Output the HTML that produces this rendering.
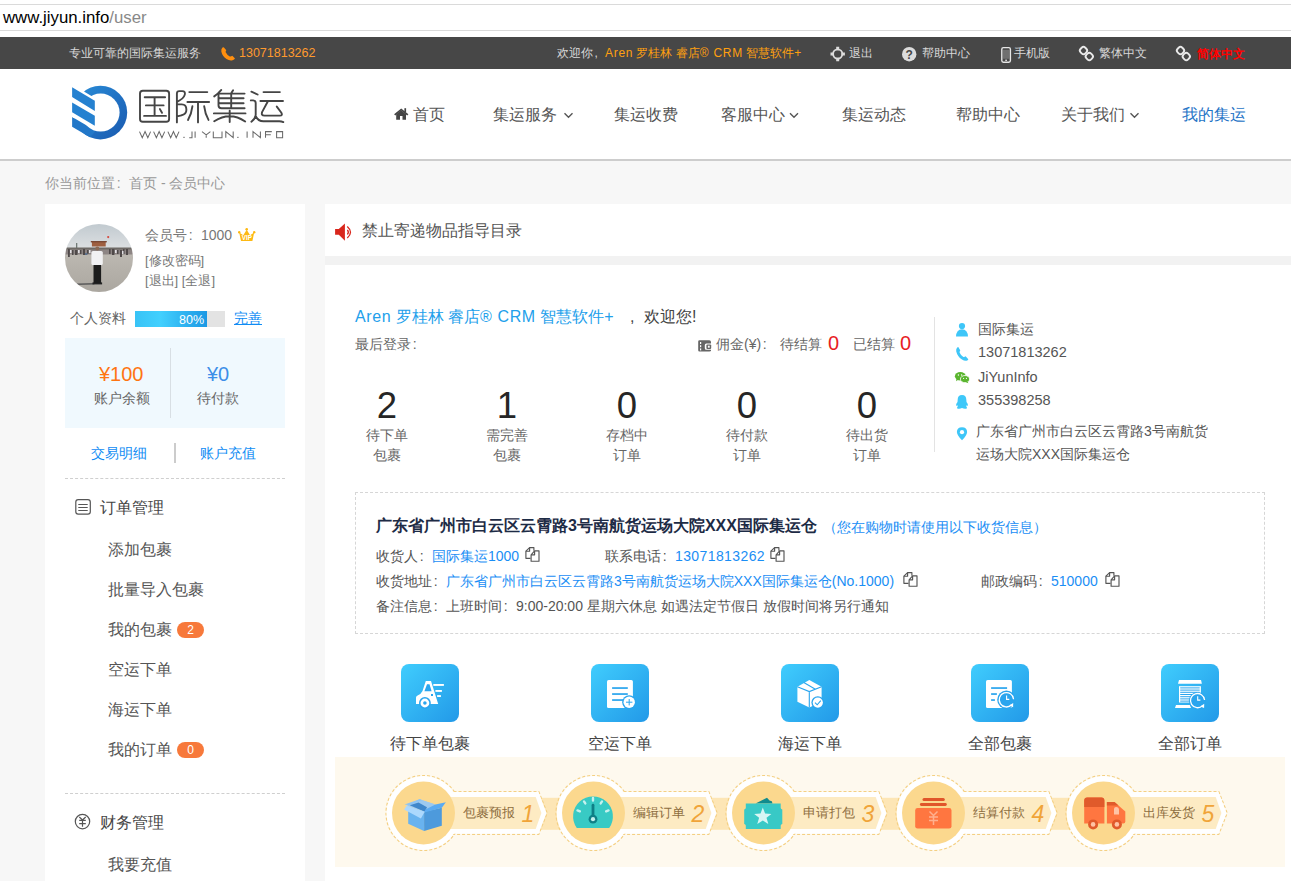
<!DOCTYPE html>
<html><head><meta charset="utf-8">
<style>
*{margin:0;padding:0;box-sizing:border-box}
html,body{width:1291px;height:881px;overflow:hidden}
body{position:relative;background:#f7f7f7;font-family:"Liberation Sans",sans-serif;color:#555;font-size:14px}
.a{position:absolute;white-space:nowrap;line-height:1}
#url{position:absolute;left:0;top:0;width:1291px;height:37px;background:#fff}
#url .l1{position:absolute;left:0;top:4px;width:1291px;height:1px;background:#dadada}
#url .l2{position:absolute;left:0;top:30px;width:1291px;height:1px;background:#dadada}
#topbar{position:absolute;left:0;top:37px;width:1291px;height:32px;background:#474747;color:#d8d8d8;font-size:12px}
#header{position:absolute;left:0;top:69px;width:1291px;height:92px;background:#fff;border-bottom:2px solid #cdcdcd}
.nav{font-size:16px;color:#555}
#side{position:absolute;left:45px;top:204px;width:260px;height:700px;background:#fff}
#notice{position:absolute;left:325px;top:204px;width:966px;height:52px;background:#fff}
#gap{position:absolute;left:325px;top:256px;width:966px;height:9px;background:#f2f2f2}
#main{position:absolute;left:325px;top:265px;width:966px;height:620px;background:#fff}
.badge{position:absolute;width:27px;height:16px;border-radius:8px;background:#f7793b;color:#fff;font-size:12px;line-height:16px;text-align:center}
.stat{position:absolute;top:125px;width:80px;text-align:center;font-size:14px;line-height:20px;color:#666}
.stat b{display:block;font-weight:normal;font-size:36.5px;line-height:36px;color:#262626;margin:-2px 0 1px}
.ci{font-size:14px;color:#555}
#addr{position:absolute;left:30px;top:227px;width:910px;height:142px;border:1px dashed #d6d6d6}
.ar{font-size:14px;color:#555}
.bl{color:#1a8ef5}
.qi{position:absolute;top:399px;width:120px;text-align:center;font-size:16px;color:#444;line-height:20px}
.qs{display:block;margin:-1px auto 11px}
#steps{position:absolute;left:10px;top:492px;width:950px;height:110px;background:#fef9ee}
.fw{display:inline-block;width:1em;font-style:normal;text-indent:.12em}
.stl{font-size:12.6px;color:#8d6e40}
.stn{font-size:23px;font-style:italic;color:#f0a439}
</style></head><body>
<svg width="0" height="0" style="position:absolute"><defs><linearGradient id="qg" x1="0" y1="0" x2="1" y2="1"><stop offset="0" stop-color="#40cdfd"/><stop offset="1" stop-color="#2299e8"/></linearGradient></defs></svg>
<div id="url"><div class="l1"></div><div class="l2"></div>
<div class="a" style="left:3px;top:10px;font-size:16.8px;color:#000">www.jiyun.info<span style="color:#888">/user</span></div>
</div>
<div id="topbar">
<div class="a" style="left:69px;top:10px">专业可靠的国际集运服务</div>
<div class="a" style="left:239px;top:10px;color:#ff9a2e;font-size:12.5px">13071813262</div>
<div class="a" style="left:557px;top:10px">欢迎你<i class="fw">,</i><span style="color:#ffa00f"><span style="letter-spacing:.7px">Aren</span> 罗桂林 睿店<span style="letter-spacing:.7px">® CRM</span> 智慧软件+</span></div>
<div class="a" style="left:849px;top:10px">退出</div>
<div class="a" style="left:922px;top:10px">帮助中心</div>
<div class="a" style="left:1014px;top:10px">手机版</div>
<div class="a" style="left:1099px;top:10px">繁体中文</div>
<div class="a" style="left:1197px;top:11px;color:#f00;font-weight:bold">简体中文</div>
</div>
<div id="header">
<div class="a nav" style="left:413px;top:38px">首页</div>
<div class="a nav" style="left:493px;top:38px">集运服务</div>
<div class="a nav" style="left:614px;top:38px">集运收费</div>
<div class="a nav" style="left:721px;top:38px">客服中心</div>
<div class="a nav" style="left:842px;top:38px">集运动态</div>
<div class="a nav" style="left:956px;top:38px">帮助中心</div>
<div class="a nav" style="left:1061px;top:38px">关于我们</div>
<div class="a nav" style="left:1182px;top:38px;color:#1f74c6">我的集运</div>
</div>
<div class="a" style="left:45px;top:176px;font-size:14px;color:#999">你当前位置<i class="fw">:</i>首页 - 会员中心</div>
<div id="side">
<svg style="position:absolute;left:20px;top:20px" width="68" height="68" viewBox="0 0 68 68">
<defs><clipPath id="avc"><circle cx="34" cy="34" r="34"/></clipPath>
<filter id="avb" x="-5%" y="-5%" width="110%" height="110%"><feGaussianBlur stdDeviation=".45"/></filter>
<linearGradient id="sky" x1="0" y1="0" x2="0" y2="1"><stop offset="0" stop-color="#bfc8ce"/><stop offset="1" stop-color="#dde0e2"/></linearGradient>
<linearGradient id="gnd" x1="0" y1="0" x2="0" y2="1"><stop offset="0" stop-color="#bdb9b2"/><stop offset="1" stop-color="#aaa69f"/></linearGradient></defs>
<g clip-path="url(#avc)"><g filter="url(#avb)">
<rect x="-2" y="-2" width="72" height="27" fill="url(#sky)"/>
<rect x="-2" y="27" width="72" height="43" fill="url(#gnd)"/>
<rect x="26.9" y="17.7" width="13.8" height="4.8" fill="#9e5f40"/>
<rect x="25.8" y="17" width="16" height="1.4" fill="#7a4a36"/>
<rect x="11" y="19" width="1.3" height="5" fill="#6f7a76"/>
<path d="M-2 23.5H70V27.5H-2Z" fill="#6e6a66"/>
<path d="M-2 25.5H70V30.5H-2Z" fill="#8d8584"/>
<g fill="#4f4a4a"><rect x="3" y="25" width="1.8" height="8"/><rect x="7" y="26" width="1.5" height="5"/><rect x="10" y="26" width="2.5" height="5"/><rect x="15" y="26" width="1.4" height="4"/><rect x="18" y="25" width="2" height="6"/><rect x="22" y="26" width="1.5" height="4"/><rect x="44" y="25" width="1.6" height="5"/><rect x="47" y="25" width="2.4" height="6"/><rect x="52" y="26" width="1.5" height="4"/><rect x="55" y="26" width="2" height="7"/><rect x="58" y="25" width="1.5" height="5"/><rect x="61" y="25" width="2" height="6"/></g>
<g fill="#e4e2e6"><rect x="5" y="26" width="1.5" height="3"/><rect x="13" y="26" width="1.6" height="3"/><rect x="24" y="26" width="1.5" height="3"/><rect x="50" y="26" width="1.6" height="3"/><rect x="57" y="27" width="1.5" height="3"/></g>
<rect x="20" y="29" width="2.4" height="2" fill="#5d6f8a"/>
<circle cx="43.2" cy="13.1" r="1.1" fill="#d64a3f"/>
<path d="M11.7 59.6L29.4 59.1V60.5L12 60.9Z" fill="#5b5b5b"/>
<circle cx="32.3" cy="24.6" r="2" fill="#8a6a56"/>
<rect x="26.4" y="27" width="11.4" height="14.2" rx="1.6" fill="#f1f1f3"/>
<rect x="28.5" y="41" width="7.6" height="18" fill="#1e1e1e"/>
<rect x="27.5" y="58.4" width="9.6" height="2" fill="#222"/>
</g></g></svg>
<div class="a" style="left:100px;top:24px;font-size:14px;color:#777">会员号<i class="fw">:</i>1000</div>
<div class="a" style="left:100px;top:50px;font-size:13px;color:#777">[修改密码]</div>
<div class="a" style="left:100px;top:70px;font-size:13px;color:#777">[退出] [全退]</div>
<div class="a" style="left:25px;top:107px;font-size:14px;color:#666">个人资料</div>
<div style="position:absolute;left:90px;top:107px;width:90px;height:16px;background:#e3e3e3"><div style="width:72px;height:16px;background:linear-gradient(90deg,#38c3f6,#42d0fe 35%,#1c98e4)"></div></div>
<div class="a" style="left:134px;top:110px;font-size:12.5px;color:#fff">80%</div>
<div class="a" style="left:189px;top:107px;font-size:14px;color:#0f8cf4;text-decoration:underline">完善</div>
<div style="position:absolute;left:20px;top:134px;width:220px;height:90px;background:#f0f9fe"></div>
<div style="position:absolute;left:125px;top:144px;width:1px;height:70px;background:#d8dfe4"></div>
<div class="a" style="left:54px;top:160px;font-size:20px;color:#ff7412">¥100</div>
<div class="a" style="left:49px;top:187px;font-size:14px;color:#666">账户余额</div>
<div class="a" style="left:162px;top:160px;font-size:20px;color:#3d8fe8">¥0</div>
<div class="a" style="left:152px;top:187px;font-size:14px;color:#666">待付款</div>
<div class="a" style="left:46px;top:242px;font-size:14px;color:#0f8cf4">交易明细</div>
<div style="position:absolute;left:129px;top:239px;width:2px;height:20px;background:#ccc"></div>
<div class="a" style="left:155px;top:242px;font-size:14px;color:#0f8cf4">账户充值</div>
<div style="position:absolute;left:20px;top:274px;width:220px;border-top:1px dashed #cfcfcf"></div>
<div class="a" style="left:55px;top:296px;font-size:16px;color:#444">订单管理</div>
<div class="a" style="left:63px;top:338px;font-size:16px;color:#555">添加包裹</div>
<div class="a" style="left:63px;top:378px;font-size:16px;color:#555">批量导入包裹</div>
<div class="a" style="left:63px;top:418px;font-size:16px;color:#555">我的包裹</div>
<div class="badge" style="left:132px;top:418px">2</div>
<div class="a" style="left:63px;top:458px;font-size:16px;color:#555">空运下单</div>
<div class="a" style="left:63px;top:498px;font-size:16px;color:#555">海运下单</div>
<div class="a" style="left:63px;top:538px;font-size:16px;color:#555">我的订单</div>
<div class="badge" style="left:132px;top:538px">0</div>
<div style="position:absolute;left:20px;top:589px;width:220px;border-top:1px dashed #cfcfcf"></div>
<div class="a" style="left:55px;top:611px;font-size:16px;color:#444">财务管理</div>
<div class="a" style="left:63px;top:653px;font-size:16px;color:#555">我要充值</div>
</div>
<div id="notice">
<div class="a" style="left:37px;top:19px;font-size:16px;color:#555">禁止寄递物品指导目录</div>
</div>
<div id="gap"></div>
<div id="main">
<div class="a" style="left:30px;top:44px;font-size:16px;color:#22a0eb"><span style="letter-spacing:.6px">Aren</span> 罗桂林 睿店<span style="letter-spacing:.6px">® CRM</span> 智慧软件+</div>
<div class="a" style="left:303px;top:44px;font-size:16px;color:#444"><i class="fw">,</i>欢迎您!</div>
<div class="a" style="left:30px;top:72px;font-size:14px;color:#666">最后登录<i class="fw">:</i></div>
<div class="a" style="left:391px;top:72px;font-size:14px;color:#666">佣金(¥)<i class="fw">:</i></div>
<div class="a" style="left:455px;top:72px;font-size:14px;color:#666">待结算</div>
<div class="a" style="left:503px;top:68px;font-size:20px;color:#e8201f">0</div>
<div class="a" style="left:528px;top:72px;font-size:14px;color:#666">已结算</div>
<div class="a" style="left:575px;top:68px;font-size:20px;color:#e8201f">0</div>
<div class="stat" style="left:22px"><b>2</b>待下单<br>包裹</div>
<div class="stat" style="left:142px"><b>1</b>需完善<br>包裹</div>
<div class="stat" style="left:262px"><b>0</b>存档中<br>订单</div>
<div class="stat" style="left:382px"><b>0</b>待付款<br>订单</div>
<div class="stat" style="left:502px"><b>0</b>待出货<br>订单</div>
<div style="position:absolute;left:609px;top:52px;width:1px;height:135px;background:#e3e3e3"></div>
<div class="a ci" style="left:653px;top:57px">国际集运</div>
<div class="a ci" style="left:653px;top:80px;font-size:14.5px">13071813262</div>
<div class="a ci" style="left:653px;top:105px;font-size:14.5px">JiYunInfo</div>
<div class="a ci" style="left:653px;top:128px;font-size:14.5px">355398258</div>
<div class="a ci" style="left:651px;top:159px">广东省广州市白云区云霄路3号南航货</div>
<div class="a ci" style="left:651px;top:182px">运场大院XXX国际集运仓</div>
<div id="addr">
<div class="a" style="left:20px;top:25px;font-size:16px;color:#1d2b45;font-weight:bold">广东省广州市白云区云霄路3号南航货运场大院XXX国际集运仓</div>
<div class="a" style="left:467px;top:27px;font-size:14px;color:#1a8ef5">（您在购物时请使用以下收货信息）</div>
<div class="a ar" style="left:20px;top:56px">收货人<i class="fw">:</i><span class="bl">国际集运1000</span></div>
<div class="a ar" style="left:249px;top:56px">联系电话<i class="fw">:</i><span class="bl" style="letter-spacing:.4px">13071813262</span></div>
<div class="a ar" style="left:20px;top:81px">收货地址<i class="fw">:</i><span class="bl">广东省广州市白云区云霄路3号南航货运场大院XXX国际集运仓(No.1000)</span></div>
<div class="a ar" style="left:625px;top:81px">邮政编码<i class="fw">:</i><span class="bl">510000</span></div>
<div class="a ar" style="left:20px;top:106px">备注信息<i class="fw">:</i>上班时间<i class="fw">:</i>9:00-20:00 星期六休息 如遇法定节假日 放假时间将另行通知</div>
</div>
<div class="qi" style="left:45px"><svg class="qs" width="60" height="60" viewBox="0 0 60 60"><rect x="1" y="1" width="58" height="58" rx="8" fill="url(#qg)"/><path d="M25.8 18H31L38.2 41H30.2A5.8 5.8 0 0 0 19.5 41H16V34.5Q16 33 18 32.2Q21 31 22.5 28Z" fill="#fff"/>
<path d="M27 21.2H29.5L31.6 28.3H24.4Z" fill="#2aa5ee"/>
<rect x="31" y="31" width="2" height="2" fill="#2aa5ee"/>
<circle cx="24.9" cy="40" r="5.9" fill="#2aa5ee"/>
<circle cx="24.9" cy="40" r="4.4" fill="#fff"/><circle cx="24.9" cy="40" r="1.8" fill="#2aa5ee"/>
<rect x="33.3" y="21" width="10.6" height="1.9" fill="#fff"/>
<rect x="35.4" y="27" width="6.5" height="1.9" fill="#fff"/>
<rect x="37.1" y="32.1" width="3.8" height="1.9" fill="#fff"/></svg>待下单包裹</div>
<div class="qi" style="left:235px"><svg class="qs" width="60" height="60" viewBox="0 0 60 60"><rect x="1" y="1" width="58" height="58" rx="8" fill="url(#qg)"/><rect x="17" y="17" width="25.9" height="28" rx="1.6" fill="#fff"/>
<rect x="22.1" y="24.2" width="15.7" height="1.7" fill="#2aa5ee"/>
<rect x="22.1" y="30.2" width="15.7" height="1.7" fill="#2aa5ee"/>
<rect x="22.1" y="36.2" width="15.7" height="1.7" fill="#2aa5ee"/>
<circle cx="39.2" cy="39.2" r="7" fill="#2aa5ee"/>
<circle cx="39.2" cy="39.2" r="5.7" fill="#fff"/>
<path d="M36 39.2H42.4M39.2 36V42.4" stroke="#2aa5ee" stroke-width="1"/></svg>空运下单</div>
<div class="qi" style="left:425px"><svg class="qs" width="60" height="60" viewBox="0 0 60 60"><rect x="1" y="1" width="58" height="58" rx="8" fill="url(#qg)"/><path d="M29.3 17L41.6 23.8V38.8L29.3 44.6L17.4 38.8V23.8Z" fill="#fff"/>
<path d="M17.4 23.8L29.3 28.6L41.6 23.8M29.3 28.6V44.6M23.8 19.6L35.4 26.2" fill="none" stroke="#2aa5ee" stroke-width="1.1"/>
<circle cx="37.8" cy="39.6" r="6.4" fill="#2aa5ee"/>
<circle cx="37.8" cy="39.6" r="5.1" fill="#fff"/>
<path d="M35 39.6L37.2 41.8L40.8 37.7" fill="none" stroke="#2aa5ee" stroke-width="1.1"/></svg>海运下单</div>
<div class="qi" style="left:615px"><svg class="qs" width="60" height="60" viewBox="0 0 60 60"><rect x="1" y="1" width="58" height="58" rx="8" fill="url(#qg)"/><rect x="16" y="17" width="25.9" height="28" rx="1.6" fill="#fff"/>
<rect x="21.1" y="24.2" width="16" height="1.7" fill="#2aa5ee"/>
<rect x="21.1" y="30.2" width="5.8" height="1.7" fill="#2aa5ee"/>
<rect x="21.1" y="36.2" width="3.8" height="1.7" fill="#2aa5ee"/>
<circle cx="36.4" cy="36.8" r="9.2" fill="#2aa5ee"/>
<path d="M43.6 36.2A7.2 7.2 0 1 0 41.6 41.8" fill="none" stroke="#fff" stroke-width="1.3"/>
<path d="M43.2 40L43.1 44.3L39.3 42.6Z" fill="#fff"/>
<path d="M36.6 32.5V36.4H39.3" fill="none" stroke="#fff" stroke-width="1.1"/></svg>全部包裹</div>
<div class="qi" style="left:805px"><svg class="qs" width="60" height="60" viewBox="0 0 60 60"><rect x="1" y="1" width="58" height="58" rx="8" fill="url(#qg)"/><path d="M19 17H41L41.9 20.8H18Z" fill="#fff"/>
<rect x="19" y="23.2" width="21.9" height="16.3" fill="#fff"/>
<g fill="#2aa5ee"><rect x="20.2" y="24.4" width="19.5" height="1"/><rect x="20.2" y="26.6" width="19.5" height="1"/><rect x="20.2" y="28.8" width="19.5" height="1"/><rect x="20.2" y="31" width="19.5" height="1"/><rect x="20.2" y="33.2" width="19.5" height="1"/><rect x="20.2" y="35.4" width="19.5" height="1"/><rect x="20.2" y="37.6" width="19.5" height="1"/></g>
<path d="M16 41.9H29.8L31 45H15Z" fill="#fff"/>
<circle cx="37.5" cy="37.5" r="8.6" fill="#2aa5ee"/>
<path d="M44.6 37A7.1 7.1 0 1 0 42.6 42.6" fill="none" stroke="#fff" stroke-width="1.3"/>
<path d="M44.2 40.8L44.1 45.1L40.3 43.4Z" fill="#fff"/>
<path d="M37.7 33.2V37.1H40.4" fill="none" stroke="#fff" stroke-width="1.1"/></svg>全部订单</div>
<div id="steps"><svg width="950" height="110" viewBox="0 0 950 110" style="position:absolute;left:0;top:0">
<rect x="88.5" y="40.8" width="680.0" height="32" fill="#fde6b6"/>
<circle cx="88.5" cy="56" r="37.5" fill="none" stroke="#f4d084" stroke-width="1.2" stroke-dasharray="3 2"/>
<path d="M88.5 34.5H203.8L212.2 56L203.8 77.3H88.5Z" fill="none" stroke="#f4d084" stroke-width="1.2" stroke-dasharray="3 2"/>
<circle cx="88.5" cy="56" r="36.9" fill="#fff"/>
<path d="M88.5 35.1H203.5L211.5 56L203.5 76.7H88.5Z" fill="#fff"/>
<path d="M88.5 40H200.7L206.4 56L200.7 72H88.5Z" fill="#fdebc3"/>
<circle cx="88.5" cy="56" r="31.5" fill="#fbd88e"/>
<circle cx="258.5" cy="56" r="37.5" fill="none" stroke="#f4d084" stroke-width="1.2" stroke-dasharray="3 2"/>
<path d="M258.5 34.5H373.8L382.2 56L373.8 77.3H258.5Z" fill="none" stroke="#f4d084" stroke-width="1.2" stroke-dasharray="3 2"/>
<circle cx="258.5" cy="56" r="36.9" fill="#fff"/>
<path d="M258.5 35.1H373.5L381.5 56L373.5 76.7H258.5Z" fill="#fff"/>
<path d="M258.5 40H370.7L376.4 56L370.7 72H258.5Z" fill="#fdebc3"/>
<circle cx="258.5" cy="56" r="31.5" fill="#fbd88e"/>
<circle cx="428.5" cy="56" r="37.5" fill="none" stroke="#f4d084" stroke-width="1.2" stroke-dasharray="3 2"/>
<path d="M428.5 34.5H543.8L552.2 56L543.8 77.3H428.5Z" fill="none" stroke="#f4d084" stroke-width="1.2" stroke-dasharray="3 2"/>
<circle cx="428.5" cy="56" r="36.9" fill="#fff"/>
<path d="M428.5 35.1H543.5L551.5 56L543.5 76.7H428.5Z" fill="#fff"/>
<path d="M428.5 40H540.7L546.4 56L540.7 72H428.5Z" fill="#fdebc3"/>
<circle cx="428.5" cy="56" r="31.5" fill="#fbd88e"/>
<circle cx="598.5" cy="56" r="37.5" fill="none" stroke="#f4d084" stroke-width="1.2" stroke-dasharray="3 2"/>
<path d="M598.5 34.5H713.8L722.2 56L713.8 77.3H598.5Z" fill="none" stroke="#f4d084" stroke-width="1.2" stroke-dasharray="3 2"/>
<circle cx="598.5" cy="56" r="36.9" fill="#fff"/>
<path d="M598.5 35.1H713.5L721.5 56L713.5 76.7H598.5Z" fill="#fff"/>
<path d="M598.5 40H710.7L716.4 56L710.7 72H598.5Z" fill="#fdebc3"/>
<circle cx="598.5" cy="56" r="31.5" fill="#fbd88e"/>
<circle cx="768.5" cy="56" r="37.5" fill="none" stroke="#f4d084" stroke-width="1.2" stroke-dasharray="3 2"/>
<path d="M768.5 34.5H883.8L892.2 56L883.8 77.3H768.5Z" fill="none" stroke="#f4d084" stroke-width="1.2" stroke-dasharray="3 2"/>
<circle cx="768.5" cy="56" r="36.9" fill="#fff"/>
<path d="M768.5 35.1H883.5L891.5 56L883.5 76.7H768.5Z" fill="#fff"/>
<path d="M768.5 40H880.7L886.4 56L880.7 72H768.5Z" fill="#fdebc3"/>
<circle cx="768.5" cy="56" r="31.5" fill="#fbd88e"/>
<g transform="translate(88.5,56)">
<path d="M-16.7 -7.6L-4 -13.7L11.9 -8.5L1.9 -3.5L1.25 -1.2Z" fill="#9dc9ef"/>
<path d="M-4 -13.7L11.9 -8.5L1.9 -3L-13.7 -7.8Z" fill="#9dc9ef"/>
<path d="M-19 -8.5L-4 -13.7L-1.5 -13L-13.7 -7.8Z" fill="#8cc3f4"/>
<path d="M-13.7 -7.8L-5 -10.5L3.5 -5.8L1.25 -1.2Z" fill="#3f87cb"/>
<path d="M-15.3 -6.8L0.6 -1.2V17.9L-15.3 10.8Z" fill="#69b3ef"/>
<path d="M0.6 -1.2L18.3 -5.3V12.7L0.6 17.9Z" fill="#4d9adc"/>
<path d="M0.6 -0.6L1.9 -3.5L11.9 -8.5L22.4 -10.7L18.3 -5.3Z" fill="#5aabf3"/>
<path d="M-16.7 -7.6L1.25 -1.2L-2.6 5.6L-19.4 -3.5Z" fill="#acd8fd"/>
</g>
<g transform="translate(258.5,56)">
<path d="M-16.7 15A19.9 19.9 0 1 1 15.7 15Z" fill="#38cac4"/>
<g stroke="#c5f1ee" stroke-width="2.4" stroke-linecap="round"><path d="M-0.5 -15V-12.4M-9.5 -11.6L-8.2 -9.6M8.5 -11.6L7.2 -9.6M-16 -2.6L-13.6 -1.6M15 -2.6L12.6 -1.6"/></g>
<path d="M-0.5 -7.8V4" stroke="#0e7f86" stroke-width="2.8" stroke-linecap="round"/>
<circle cx="-0.5" cy="6.2" r="4.4" fill="#0e7f86"/><circle cx="-0.5" cy="6.2" r="2.1" fill="#c5f1ee"/>
</g>
<g transform="translate(428.5,56)">
<path d="M-8 -9.5L3.5 -15.2L6 -12.5L8.3 -11.8L9 -9.5Z" fill="#118b8d"/>
<path d="M-17.7 -9.5H17.2V-5A2 2 0 0 0 18.8 -3.5V11A2 2 0 0 0 17.2 12.5V16.1H-17.7V12.5A2 2 0 0 0 -19.3 11V-3.5A2 2 0 0 0 -17.7 -5Z" fill="#38c9c6"/>
<path d="M-0.7 -5.5L1.6 0.6L7.9 0.9L3 4.8L4.8 11L-0.7 7.5L-6.2 11L-4.4 4.8L-9.3 0.9L-3 0.6Z" fill="#d8f6f4"/>
</g>
<g transform="translate(598.5,56)">
<rect x="-11" y="-15.1" width="22.3" height="3" rx="1.5" fill="#e0552a"/>
<rect x="-13.6" y="-9.9" width="26.9" height="2.8" rx="1.4" fill="#e0552a"/>
<rect x="-18.3" y="-4.9" width="36.3" height="20.5" rx="2.4" fill="#ff7640"/>
<g stroke="#ffb08e" stroke-width="1.5" fill="none"><path d="M-4 -1.5L0 2.5L4 -1.5M0 2.5V12M-4.5 4H4.5M-4.5 7.5H4.5"/></g>
</g>
<g transform="translate(768.5,56)">
<path d="M-19.3 -12.5A3 3 0 0 1 -16.3 -15.4H-2.1A3 3 0 0 1 0.9 -12.5V10.5H-19.3Z" fill="#ff7640"/>
<path d="M-19.3 -12.5A3 3 0 0 1 -16.3 -15.4H-2.1A3 3 0 0 1 0.9 -12.5V-6H-19.3Z" fill="#e05a2b"/>
<path d="M3.4 -11H11L21.8 -1.5V8.5A2 2 0 0 1 19.8 10.5H3.4Z" fill="#ff7640"/>
<path d="M3.4 -11H11L15 -7.5H3.4Z" fill="#e05a2b"/>
<path d="M12.5 -6A3 3 0 0 1 15.5 -3V1.5H10.5V-4Q10.5 -6 12.5 -6Z" fill="#ffc3a5"/>
<circle cx="-10.4" cy="11.4" r="5" fill="#e05a2b"/><circle cx="-10.4" cy="11.4" r="2.3" fill="#ffc3a5"/>
<circle cx="13.4" cy="11.4" r="5" fill="#e05a2b"/><circle cx="13.4" cy="11.4" r="2.3" fill="#ffc3a5"/>
</g>
</svg>
<div class="a stl" style="left:128.0px;top:49.5px">包裹预报</div>
<div class="a stn" style="left:186.5px;top:46px">1</div>
<div class="a stl" style="left:298.0px;top:49.5px">编辑订单</div>
<div class="a stn" style="left:356.5px;top:46px">2</div>
<div class="a stl" style="left:468.0px;top:49.5px">申请打包</div>
<div class="a stn" style="left:526.5px;top:46px">3</div>
<div class="a stl" style="left:638.0px;top:49.5px">结算付款</div>
<div class="a stn" style="left:696.5px;top:46px">4</div>
<div class="a stl" style="left:808.0px;top:49.5px">出库发货</div>
<div class="a stn" style="left:866.5px;top:46px">5</div></div>
</div>
<svg id="ov" width="1291" height="881" viewBox="0 0 1291 881" style="position:absolute;left:0;top:0;pointer-events:none">
<defs>
<linearGradient id="lg" x1="0" y1="0" x2="1" y2="1"><stop offset="0" stop-color="#2a8ed8"/><stop offset="0.6" stop-color="#1f6dc0"/><stop offset="1" stop-color="#1a5aae"/></linearGradient>
</defs>
<!-- logo mark -->
<g transform="translate(68,82)">
<circle cx="32.4" cy="30.6" r="26.8" fill="url(#lg)"/>
<polygon points="4.1,34.9 26.8,48.3 26.8,50 22,55.3 4.1,44.7" fill="#2277c8"/>
<circle cx="32.6" cy="30.6" r="19" fill="#fff"/>
<polygon points="0,0.1 26.8,15.9 26.8,48.3 0,32.5" fill="#fff"/>
<polygon points="4.1,5.3 26.8,18.7 26.8,28.9 4.1,15.1" fill="#2581d0"/>
<polygon points="4.1,20.4 26.8,33.8 26.8,43.7 4.1,30.3" fill="#2581d0"/>
</g>
<!-- topbar icons -->
<path d="M222.5 47.5Q221 49 221.3 51.5Q222.3 56 226.5 59Q229.5 61 232.5 60.3Q234.3 59.8 235 58.5L232.3 55.8Q231 56.8 229.8 56.5Q227 55 225.7 52.3Q225.5 51.2 226.3 50.3L223.7 47.2Z" fill="#ff8f0f"/>
<g fill="none" stroke="#dcdcdc" stroke-width="1.8"><circle cx="837.7" cy="54" r="4.6"/></g>
<g fill="#dcdcdc"><path d="M836.2 46.8h3v3.4h-3zM836.2 57.8h3v3.4h-3zM830.5 52.5h3.4v3h-3.4zM841.5 52.5h3.4v3h-3.4z"/></g>
<circle cx="909.2" cy="54.2" r="7.2" fill="#dcdcdc"/>
<text x="909.2" y="58.6" font-size="12" font-weight="bold" fill="#474747" text-anchor="middle" font-family="Liberation Sans">?</text>
<rect x="1001.8" y="47.6" width="8.6" height="14.6" rx="1.6" fill="none" stroke="#e6e6e6" stroke-width="1.4"/>
<rect x="1003" y="49.8" width="6.2" height="9" fill="#e6e6e6" opacity=".25"/>
<rect x="1005.3" y="59.6" width="1.6" height="1.4" fill="#e6e6e6"/>
<g fill="none" stroke="#e8e8e8" stroke-width="1.9"><rect x="1080.20" y="47.30" width="6.6" height="6.6" rx="2.6" transform="rotate(45 1083.5 50.6)"/><rect x="1086.00" y="53.20" width="6.6" height="6.6" rx="2.6" transform="rotate(45 1089.3 56.5)"/><rect x="1177.20" y="47.30" width="6.6" height="6.6" rx="2.6" transform="rotate(45 1180.5 50.6)"/><rect x="1183.00" y="53.20" width="6.6" height="6.6" rx="2.6" transform="rotate(45 1186.3 56.5)"/></g>
<!-- nav icons -->
<path d="M394.1 114.3L401.2 108.6L408.4 114.3L407.2 115.4L401.2 110.6L395.3 115.4Z" fill="#454545"/>
<path d="M396.2 114.2L401.2 110.3L406 114.2V119.8H402.5V116H400V119.8H396.2Z" fill="#454545"/>
<rect x="404.4" y="108.2" width="1.7" height="4" fill="#454545"/>
<g fill="none" stroke="#555" stroke-width="1.4">
<path d="M564.5 113.3L568.5 117.3L572.5 113.3"/>
<path d="M790 113.3L794 117.3L798 113.3"/>
<path d="M1130.5 113.3L1134.5 117.3L1138.5 113.3"/>
</g>
<!-- crown -->
<path d="M239.2 232.5L243.3 235.3L246.7 229.8L250.1 235.3L254.2 232.5L252.4 240.9H241Z" fill="#fdb913"/><circle cx="239.2" cy="232.3" r="1.2" fill="#fdb913"/><circle cx="254.2" cy="232.3" r="1.2" fill="#fdb913"/><circle cx="246.7" cy="229.2" r="1.3" fill="#fdb913"/>
<text x="246.9" y="239.6" font-size="6.3" font-weight="bold" fill="#fff" text-anchor="middle" font-family="Liberation Sans">VIP</text>
<!-- sidebar icons -->
<g fill="none" stroke="#555" stroke-width="1.2">
<rect x="75.8" y="499.6" width="14.5" height="14.6" rx="2.4"/>
<path d="M78.3 504.5H87.7M78.3 507.5H87.7M78.3 510.5H87.7"/>
<circle cx="82.5" cy="821.6" r="7.2"/>
<path d="M79.3 817L82.5 820L85.7 817M79.2 820.4H85.8M79.2 823.6H85.8M82.5 820V826.8"/>
</g>
<!-- speaker -->
<path d="M335.1 229.1H338.8L344.9 223.6V240.8L338.8 234.8H335.1Z" fill="#d9261c"/>
<g fill="none" stroke="#d9261c" stroke-width="1.3">
<path d="M347.4 229.9Q349.3 232.2 347.4 234.5"/>
<path d="M347.3 226.4Q353.7 232.2 347.3 237.9"/>
</g>
<!-- wallet -->
<path d="M699.5 340.2H709.3Q711 340.2 711 342V343.6H706.3Q704.8 343.6 704.8 345.1V348.3Q704.8 349.8 706.3 349.8H711V350.8Q711 351.6 709.3 351.6H699.5Q698.2 351.6 698.2 350.3V341.5Q698.2 340.2 699.5 340.2Z" fill="#666"/>
<rect x="706.4" y="344.4" width="4.8" height="4.6" rx="1" fill="#666"/>
<rect x="707.9" y="345.7" width="1.8" height="2" fill="#fff"/>
<g fill="#fff"><rect x="700" y="342" width="1.2" height="2"/><rect x="700" y="345.2" width="1.2" height="2"/><rect x="700" y="348.4" width="1.2" height="2"/></g>
<!-- contact icons -->
<circle cx="962" cy="326" r="3.1" fill="#3ec6f8"/>
<path d="M956 336.6Q956.3 329.6 962 329.2Q967.7 329.6 968 336.6Z" fill="#3ec6f8"/>
<path d="M957.5 347.2Q955.8 348.6 956.2 351.2Q957.3 356.3 962 359.6Q964.8 361.4 967.2 360.6Q968.2 360.1 968.3 359.2L965.6 356.3Q964.4 357.3 963.1 356.8Q960.7 355.3 959.6 352.5Q959.4 351.4 960.3 350.6L958.3 347Z" fill="#3ec6f8"/>
<ellipse cx="960.3" cy="376.2" rx="5.4" ry="4.2" fill="#5ab52f"/>
<path d="M956.6 378.8L956 381.2L958.6 379.6Z" fill="#5ab52f"/>
<ellipse cx="965" cy="379.1" rx="4.6" ry="3.6" fill="#5ab52f" stroke="#fff" stroke-width=".8"/>
<path d="M967.6 381.6L968.4 383.2L966 382.2Z" fill="#5ab52f"/>
<g fill="#fff"><circle cx="958.4" cy="375" r=".7"/><circle cx="961.6" cy="375" r=".7"/><circle cx="963.6" cy="378.4" r=".55"/><circle cx="966.4" cy="378.4" r=".55"/></g>
<path d="M962 395C965 395 966.3 397 966.3 399.5L966.5 402Q968 403.5 968 405.5Q967.5 406 966.5 405.2L966.3 406.5Q967.3 407.5 966.8 408.4Q964.5 409.2 962 408Q959.5 409.2 957.2 408.4Q956.7 407.5 957.7 406.5L957.5 405.2Q956.5 406 956 405.5Q956 403.5 957.5 402L957.7 399.5C957.7 397 959 395 962 395Z" fill="#3ec8f9"/>
<path d="M962 427.2Q967.1 427.4 967.1 432Q967 435.3 962 440.3Q957 435.3 956.9 432Q956.9 427.4 962 427.2Z" fill="#3ec6f8"/>
<circle cx="962" cy="432.2" r="2.1" fill="#fff"/>
<!-- copy icons -->
<g fill="none" stroke="#555" stroke-width="1.15" stroke-linejoin="round">
<g id="cp"><path d="M530.5 558.3H525.9V551.2L529.6 547.6H533.9V550.8"/><path d="M529.6 547.6V551.2H525.9"/><path d="M531.1 554.8L534.6 550.9H539V561.2H531.1Z"/><path d="M534.6 550.9V554.8H531.1"/></g>
<use href="#cp" x="245" y="0"/>
<use href="#cp" x="378" y="25"/>
<use href="#cp" x="580" y="25"/>
</g>
<!-- logo text -->
<path d="M139.5 131.6L142.28 137.7L145.05 131.6L147.82 137.7L150.60 131.6M153.6 131.6L156.38 137.7L159.15 131.6L161.92 137.7L164.70 131.6M167.9 131.6L170.68 137.7L173.45 131.6L176.22 137.7L179.00 131.6M189.2 137.7H192V131.6M195.1 131.6V137.7M202 131.6L206.2 134.8L210.4 131.6M206.2 134.8V137.7M213.3 131.6V137.7H222V131.6M225.8 137.7V131.6L233.2 137.7V131.6M247.1 131.6V137.7M253 137.7V131.6L260.4 137.7V131.6M265.5 137.7V131.6H271.8M265.5 134.7H270.8M276.6 131.6H282.6V137.7H276.6Z" fill="none" stroke="#6a6a6a" stroke-width="1.05"/><rect x="183.4" y="136.8" width="1.2" height="1.2" fill="#6a6a6a"/><rect x="237.3" y="136.8" width="1.2" height="1.2" fill="#6a6a6a"/>

<g fill="none" stroke="#454545" stroke-width="1.9" stroke-linecap="round" stroke-linejoin="round">
<rect x="140" y="90.8" width="29.1" height="31" rx="2.8"/>
<path d="M144.7 97.3H165.1M145.9 105.4H163.6M144.1 115.9H166M154.6 97.3V115.9M159.9 109.1L162 112.8"/>
<path d="M176.9 122.4V93.5Q176.9 91.1 179.3 91.1H182.3Q185.6 91.1 184.8 94.6Q183.8 98.6 177 101.8M177 104.4H181.8Q186.4 104.4 186.4 109.8Q186.4 114.3 181.5 115.3L177 116.4"/>
<path d="M189.3 92.1H207.3M187.4 102H209.1M198 102V122.4M192.4 106.3Q191.5 114 188 119.9M204.2 106.3Q205.1 114 208.5 119.9"/>
<path d="M221.3 89.9Q218 94 214.2 96.4M218.5 93.3V105.2Q218.5 108.2 221.5 108.2H244.6M218.5 93.6H244.6M219.5 98.3H243.6M219.5 103.2H243.6M233.1 90.2L231.2 93.3V108.2M213.9 113.4H245.5M229.7 110.6V122.1M214.2 121.2Q222 116.2 229.7 116.2Q237.5 116.2 245.2 121.5"/>
<path d="M251.4 91.7L257.6 94.5M250.8 100.4H253.2Q255.7 100.6 255.7 103V115.2Q255.2 119 251.4 121.8M255.9 116.5Q258 121.2 263.5 121.2H279.3Q281.5 121.2 283.3 122.1M263.5 92.1H279.9M260.4 101H283M267.5 102L262.2 111.9Q260.8 115.6 264.5 115.6H279.9Q283 115.6 281.2 112.5L276.8 106.6"/>
</g>
</svg>
</body></html>
